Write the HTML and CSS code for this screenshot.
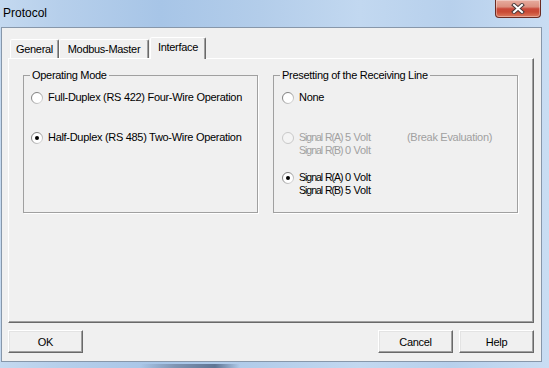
FILE: index.html
```html
<!DOCTYPE html>
<html>
<head>
<meta charset="utf-8">
<link rel="stylesheet" href="styles.css">
</head>
<body>
<div class="window">
  <div class="titlebar">
    <span class="title">Protocol</span>
    <div class="close">
      <svg width="14" height="11" viewBox="0 0 14 11">
        <path d="M3 2 L11 9 M11 2 L3 9" stroke="#4a3a3a" stroke-width="4" stroke-linecap="square"/>
        <path d="M3 2 L11 9 M11 2 L3 9" stroke="#fff" stroke-width="2" stroke-linecap="square"/>
      </svg>
    </div>
  </div>
  <div class="client">
    <div class="tabs">
      <div class="tab t-general">General</div>
      <div class="tab t-modbus">Modbus-Master</div>
      <div class="tab t-interface active">Interface</div>
    </div>
    <div class="panel">
      <div class="group g1">
        <span class="legend">Operating Mode</span>
        <div class="options">
          <div class="opt">
            <svg class="radio" width="12" height="12" viewBox="0 0 12 12"><defs><linearGradient id="rg" x1="0" y1="0" x2="1" y2="1"><stop offset="0" stop-color="#6b6b6b"/><stop offset="0.5" stop-color="#9a9a9a"/><stop offset="1" stop-color="#e6e6e6"/></linearGradient></defs><circle cx="6" cy="6" r="5.5" fill="#fff" stroke="url(#rg)"/></svg>
            <span>Full-Duplex (RS 422) Four-Wire Operation</span>
          </div>
          <div class="opt">
            <svg class="radio" width="12" height="12" viewBox="0 0 12 12"><circle cx="6" cy="6" r="5.5" fill="#fff" stroke="url(#rg)"/><circle cx="6" cy="6" r="2" fill="#000"/></svg>
            <span>Half-Duplex (RS 485) Two-Wire Operation</span>
          </div>
        </div>
      </div>
      <div class="group g2">
        <span class="legend">Presetting of the Receiving Line</span>
        <div class="options">
          <div class="opt">
            <svg class="radio" width="12" height="12" viewBox="0 0 12 12"><circle cx="6" cy="6" r="5.5" fill="#fff" stroke="url(#rg)"/></svg>
            <span>None</span>
          </div>
          <div class="opt disabled">
            <svg class="radio" width="12" height="12" viewBox="0 0 12 12"><circle cx="6" cy="6" r="5.5" fill="#f4f4f4" stroke="#c8c8c8"/></svg>
            <div class="sig">
              <span class="n">Signal</span><span class="n">R(A)</span><span class="v">5 Volt</span><span>(Break Evaluation)</span>
              <span class="n">Signal</span><span class="n">R(B)</span><span class="v">0 Volt</span><span></span>
            </div>
          </div>
          <div class="opt">
            <svg class="radio" width="12" height="12" viewBox="0 0 12 12"><circle cx="6" cy="6" r="5.5" fill="#fff" stroke="url(#rg)"/><circle cx="6" cy="6" r="2" fill="#000"/></svg>
            <div class="sig">
              <span class="n">Signal</span><span class="n">R(A)</span><span class="v">0 Volt</span><span></span>
              <span class="n">Signal</span><span class="n">R(B)</span><span class="v">5 Volt</span><span></span>
            </div>
          </div>
        </div>
      </div>
    </div>
    <div class="buttons">
      <button class="btn">OK</button>
      <span class="spacer"></span>
      <button class="btn">Cancel</button>
      <button class="btn">Help</button>
    </div>
  </div>
</div>
</body>
</html>
```
FILE: styles.css
```css
* { box-sizing: border-box; }
html, body { margin: 0; padding: 0; }
body {
  font-family: "Liberation Sans", Arial, sans-serif;
  font-size: 11px;
  letter-spacing: -0.3px;
  color: #000;
}
.window {
  width: 549px;
  height: 368px;
  display: flex;
  flex-direction: column;
  overflow: hidden;
  background:
    linear-gradient(to right, transparent 140px, #7f95b3 175px, #5f7594 215px, transparent 240px) left bottom / 100% 4px no-repeat,
    linear-gradient(to right, #c4d9f0 0px, #b6cfeb 60px, #a7c5e7 160px, #b3cdea 260px, #c2d8f0 360px, #b7d0ec 450px, #c9ddf3 549px);
}
.titlebar {
  height: 27px;
  flex-shrink: 0;
  display: flex;
  align-items: flex-start;
}
.title {
  font-size: 12px;
  letter-spacing: 0;
  line-height: 14px;
  margin: 6px 0 0 3px;
  color: #000;
}
.close {
  margin-left: auto;
  margin-right: 8px;
  width: 46px;
  height: 18px;
  border: 1px solid #6a2b22;
  border-top: none;
  border-radius: 0 0 4px 4px;
  background: linear-gradient(#e7ada0, #dc8f7f 40%, #c9493a 52%, #c94a34 70%, #dc7a5e);
  box-shadow: inset 0 0 0 1px rgba(255,255,255,0.35);
  display: flex;
  align-items: center;
  justify-content: center;
}
.client {
  margin-left: 1px;
  width: 541px;
  height: 335px;
  flex-shrink: 0;
  border: 1px solid #8797aa;
  background: #f0f0f0;
  padding: 9px 7px 8px 6px;
  display: flex;
  flex-direction: column;
}
.tabs {
  display: flex;
  align-items: flex-end;
  height: 21px;
  padding-left: 2px;
}
.tab {
  height: 19px;
  border: 1px solid;
  border-bottom: none;
  border-color: #fff #696969 transparent #fff;
  border-radius: 2px 2px 0 0;
  box-shadow: inset -1px 0 0 #a0a0a0;
  text-align: center;
  line-height: 18px;
  background: #f0f0f0;
}
.t-general { width: 49px; }
.t-modbus { width: 90px; }
.t-interface { width: 56px; margin-left: 1px; }
.tab.active {
  position: relative;
  z-index: 1;
  height: 22px;
  margin-bottom: -1px;
  line-height: 18px;
}
.panel {
  height: 265px;
  border: 1px solid;
  border-color: #fff #696969 #696969 #fff;
  box-shadow: inset -1px -1px 0 #a0a0a0;
  display: flex;
  gap: 15px;
  padding: 16px 14px 0 14px;
}
.group {
  position: relative;
  height: 138px;
  border: 1px solid #a0a0a0;
  box-shadow: 1px 1px 0 #fff;
}
.g1 { width: 235px; }
.g2 { width: 245px; }
.legend {
  position: absolute;
  top: -7px;
  left: 6px;
  padding: 0 2px;
  background: #f0f0f0;
  line-height: 13px;
}
.options {
  display: grid;
  grid-auto-rows: 40px;
  padding-top: 15px;
}
.g1 .options { padding-left: 7px; }
.g2 .options { padding-left: 8px; }
.opt {
  display: flex;
  align-items: flex-start;
  gap: 5px;
  line-height: 13px;
}
.radio {
  flex-shrink: 0;
  margin-top: 0.5px;
}
.disabled { color: #a0a0a0; }
.sig {
  display: grid;
  grid-template-columns: 26px 20px 62px auto;
  line-height: 13px;
}
.sig .n {
  letter-spacing: -1px;
  font-size: 10.5px;
  white-space: nowrap;
}
.sig .v {
  white-space: nowrap;
}
.buttons {
  display: flex;
  gap: 6px;
  margin-top: 7px;
  height: 23px;
}
.spacer { flex: 1; }
.btn {
  width: 75px;
  height: 23px;
  font-family: "Liberation Sans", Arial, sans-serif;
  font-size: 11px;
  letter-spacing: -0.3px;
  color: #000;
  background: #f0f0f0;
  border: 1px solid;
  border-color: #fff #696969 #696969 #fff;
  box-shadow: inset -1px -1px 0 #a0a0a0, inset 1px 1px 0 #e3e3e3;
  padding: 0;
  margin: 0;
}
```
